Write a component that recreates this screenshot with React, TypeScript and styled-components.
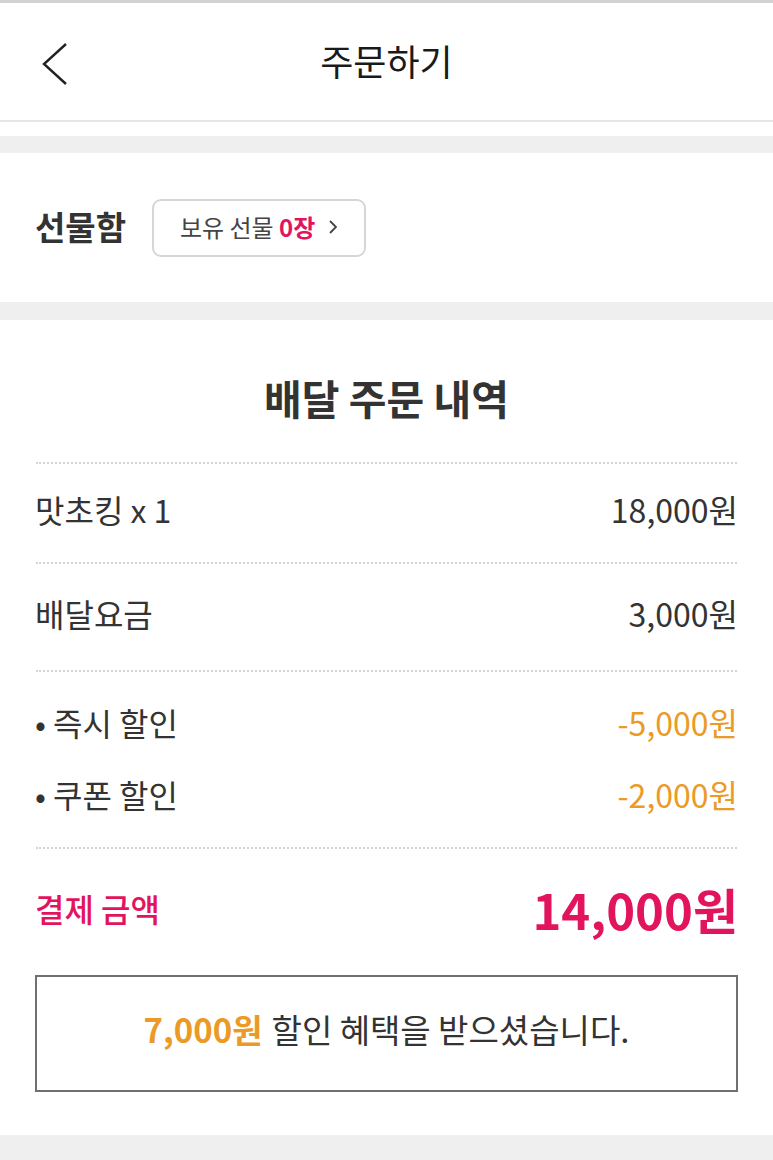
import React from "react";
import styled, { createGlobalStyle } from "styled-components";

const Global = createGlobalStyle`
  html, body { margin: 0; padding: 0; background: #ffffff; }
  body { font-family: "Noto Sans CJK KR", "Noto Sans", sans-serif; color: #333; }
  * { box-sizing: border-box; }
`;

const PINK = "#e3145e";
const ORANGE = "#eb9a26";

const Page = styled.div`
  width: 773px;
  display: flex;
  flex-direction: column;
  background: #fff;
`;

const Header = styled.header`
  height: 122px;
  border-top: 3px solid #d2d2d2;
  border-bottom: 2px solid #e6e6e6;
  position: relative;
  display: flex;
  align-items: center;
  justify-content: center;
`;

const BackButton = styled.button`
  position: absolute;
  left: 38px;
  top: 36px;
  width: 34px;
  height: 50px;
  padding: 0;
  border: none;
  background: none;
  display: flex;
  align-items: center;
  justify-content: center;
`;

const Title = styled.h1`
  margin: 0 0 4px;
  font-size: 36px;
  font-weight: 400;
  color: #1a1a1a;
`;

const Spacer = styled.div<{ $h: number }>`
  height: ${(p) => p.$h}px;
  background: #fff;
`;

const Band = styled.div<{ $h: number }>`
  height: ${(p) => p.$h}px;
  background: #efefef;
`;

const GiftSection = styled.section`
  height: 149px;
  padding: 0 35px;
  display: flex;
  align-items: center;
  gap: 26px;
`;

const GiftLabel = styled.span`
  font-size: 33px;
  font-weight: 700;
  color: #333;
  margin-bottom: 4px;
`;

const GiftButton = styled.button`
  height: 58px;
  width: 214px;
  border: 2px solid #d6d6d6;
  border-radius: 9px;
  background: #fff;
  display: flex;
  align-items: center;
  justify-content: center;
  gap: 13px;
  font-family: inherit;
  font-size: 24px;
  color: #444;
  padding: 0 0 2px;
`;

const Pink = styled.span`
  color: ${PINK};
  font-weight: 700;
`;

const OrderSection = styled.section`
  padding: 50px 35px 43px;
  display: flex;
  flex-direction: column;
`;

const OrderTitle = styled.h2`
  margin: 0 0 38px;
  text-align: center;
  font-size: 41px;
  font-weight: 700;
  color: #333;
  line-height: 54px;
`;

const Dotted = styled.div`
  border-top: 2px dotted #d4d4d4;
  margin: 0 1px;
`;

const Row = styled.div<{ $h: number }>`
  height: ${(p) => p.$h}px;
  display: flex;
  align-items: center;
  justify-content: space-between;
  font-size: 32px;
  color: #333;
  padding-bottom: 8px;
`;

const DiscountGroup = styled.div`
  padding: 18px 0 13px;
  display: flex;
  flex-direction: column;
`;

const Amount = styled.span<{ $color?: string }>`
  color: ${(p) => p.$color || "#333"};
`;

const TotalLabel = styled.span`
  font-size: 32px;
  font-weight: 500;
  color: ${PINK};
`;

const TotalAmount = styled.span`
  font-size: 49px;
  font-weight: 700;
  color: ${PINK};
`;

const BenefitBox = styled.div`
  height: 117px;
  border: 2px solid #707070;
  display: flex;
  align-items: center;
  justify-content: center;
  font-size: 33px;
  color: #333;
  padding-bottom: 10px;
`;

const Orange = styled.span`
  color: ${ORANGE};
  font-weight: 700;
  margin-right: 9px;
`;

export default function App() {
  return (
    <Page>
      <Global />
      <Header>
        <BackButton aria-label="back">
          <svg width="26" height="42" viewBox="0 0 26 42" fill="none">
            <polyline points="24,1 2,21 24,41" stroke="#222" strokeWidth="2.4" strokeLinejoin="miter" />
          </svg>
        </BackButton>
        <Title>주문하기</Title>
      </Header>
      <Spacer $h={14} />
      <Band $h={17} />
      <GiftSection>
        <GiftLabel>선물함</GiftLabel>
        <GiftButton>
          <span>
            보유 선물 <Pink>0장</Pink>
          </span>
          <svg width="10" height="16" viewBox="0 0 10 16" fill="none">
            <polyline points="2,2 8,8 2,14" stroke="#444" strokeWidth="1.8" />
          </svg>
        </GiftButton>
      </GiftSection>
      <Band $h={18} />
      <OrderSection>
        <OrderTitle>배달 주문 내역</OrderTitle>
        <Dotted />
        <Row $h={98}>
          <span>맛초킹 x 1</span>
          <Amount>18,000원</Amount>
        </Row>
        <Dotted />
        <Row $h={106}>
          <span>배달요금</span>
          <Amount>3,000원</Amount>
        </Row>
        <Dotted />
        <DiscountGroup>
          <Row $h={72}>
            <span>• 즉시 할인</span>
            <Amount $color={ORANGE}>-5,000원</Amount>
          </Row>
          <Row $h={72}>
            <span>• 쿠폰 할인</span>
            <Amount $color={ORANGE}>-2,000원</Amount>
          </Row>
        </DiscountGroup>
        <Dotted />
        <Row $h={126}>
          <TotalLabel>결제 금액</TotalLabel>
          <TotalAmount>14,000원</TotalAmount>
        </Row>
        <BenefitBox>
          <Orange>7,000원</Orange>
          <span>할인 혜택을 받으셨습니다.</span>
        </BenefitBox>
      </OrderSection>
      <Band $h={30} />
    </Page>
  );
}
